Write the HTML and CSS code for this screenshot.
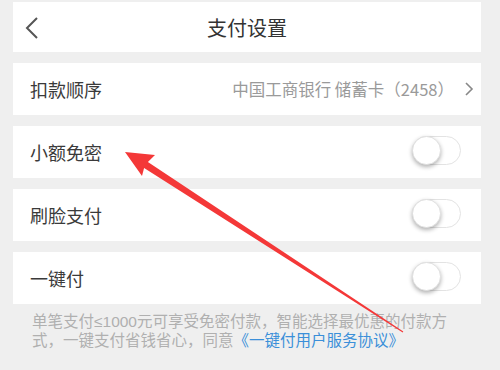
FILE: index.html
```html
<!DOCTYPE html>
<html lang="zh">
<head>
    <meta charset="UTF-8">
    <title>支付设置</title>
    <link rel="stylesheet" href="styles.css">
</head>
<body>
    <div id="page">
        <div id="nav">
            <svg class="back" width="14" height="24" viewBox="0 0 14 24">
                <path d="M12 2 L2 12 L12 22" fill="none" stroke="#555" stroke-width="2"/>
            </svg>
            <div id="title">支付设置</div>
        </div>

        <div class="row">
            <div class="label">扣款顺序</div>
            <div class="value">中国工商银行 储蓄卡（2458）</div>
            <svg class="more" width="10" height="14" viewBox="0 0 10 14">
                <path d="M2 1 L8 7 L2 13" fill="none" stroke="#888" stroke-width="1.6"/>
            </svg>
        </div>

        <div class="row">
            <div class="label">小额免密</div>
            <div class="switch"><div class="knob"></div></div>
        </div>

        <div class="row">
            <div class="label">刷脸支付</div>
            <div class="switch"><div class="knob"></div></div>
        </div>

        <div class="group">
            <div class="row">
                <div class="label">一键付</div>
                <div class="switch"><div class="knob"></div></div>
            </div>
            <div class="note">
                <div>单笔支付≤1000元可享受免密付款，智能选择最优惠的付款方</div>
                <div>式，一键支付省钱省心，同意<span class="link">《一键付用户服务协议》</span></div>
            </div>
        </div>

        <div class="row stub"></div>
    </div>

    <!-- annotation arrow drawn over the screenshot -->
    <svg id="arrow" width="500" height="370" viewBox="0 0 500 370">
        <polygon fill="#f43838" points="125,152 155,155 147.9,162.1 403.3,331.6 402.7,332.4 144.1,167.9 142,176"/>
    </svg>
</body>
</html>
```

FILE: styles.css
```css
html {
    height: 100%;
}
body {
    margin: 0;
    padding: 0;
    height: 100%;
    overflow: hidden;
    background-color: #efefef;
    font-family: "Noto Sans CJK SC", "Noto Sans", sans-serif;
    color: #3a3a3a;
}
#page {
    display: flex;
    flex-direction: column;
    gap: 11px;
    padding: 2px 19px 0 13px;
}
#nav {
    position: relative;
    height: 50px;
    display: flex;
    align-items: center;
    justify-content: center;
    background-color: white;
}
.back {
    position: absolute;
    left: 12px;
    top: 14px;
}
#title {
    font-size: 20px;
    color: #333;
}
.row {
    height: 52px;
    flex-shrink: 0;
    display: flex;
    align-items: center;
    padding: 0 20px 0 17px;
    background-color: white;
}
.row.stub {
    height: 8px;
}
.label {
    font-size: 18px;
    flex-grow: 1;
}
.value {
    font-size: 16.5px;
    color: #9a9a9a;
}
.more {
    margin-left: 10px;
    margin-right: -13px;
}
.switch {
    position: relative;
    width: 47px;
    height: 27px;
    border: 1px solid #e3e3e3;
    border-radius: 15px;
    background-color: white;
    margin-top: -3px;
}
.knob {
    position: absolute;
    left: -1px;
    top: -1px;
    width: 27px;
    height: 27px;
    border-radius: 50%;
    border: 1px solid #e0e0e0;
    background-color: white;
    box-shadow: 0 2px 4px rgba(0, 0, 0, 0.3);
}
.group {
    display: flex;
    flex-direction: column;
}
.note {
    padding: 8px 10px 12px 19px;
    font-family: "Liberation Sans", "Noto Sans CJK SC", sans-serif;
    font-size: 15.5px;
    line-height: 19px;
    color: #b0b0b0;
    white-space: nowrap;
}
.link {
    color: #3b8fd9;
}
#arrow {
    position: absolute;
    left: 0;
    top: 0;
    pointer-events: none;
}
```
